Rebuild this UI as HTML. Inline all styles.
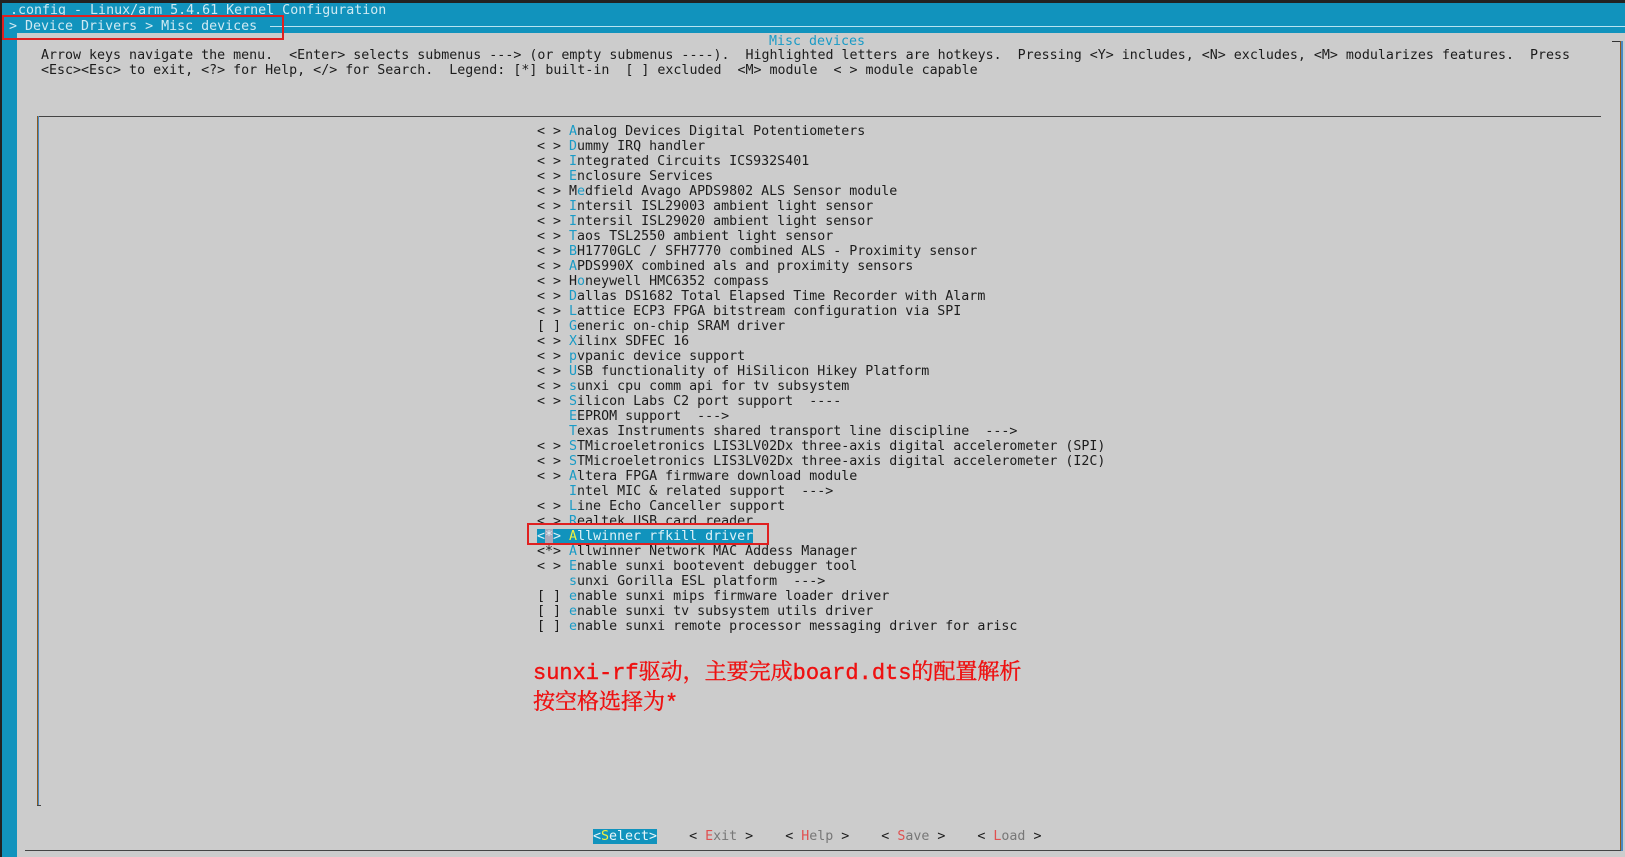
<!DOCTYPE html>
<html><head><meta charset="utf-8"><style>
html,body{margin:0;padding:0;width:1625px;height:857px;overflow:hidden;background:#cccccc}
.t{position:absolute;white-space:pre;font-family:"DejaVu Sans Mono","Liberation Mono",monospace;font-size:13.3px;line-height:15px;color:#1c1c1c}
.h{color:#1a9bc6}
.r{color:#e05050}
.g{color:#777}
.y{color:#f0f040}
</style></head><body>
<div style="position:absolute;left:0;top:0;width:1625px;height:3px;background:#222"></div>
<div style="position:absolute;left:0;top:3px;width:1625px;height:30px;background:#1193bd"></div>
<div style="position:absolute;left:0;top:0;width:2px;height:857px;background:#222"></div>
<div style="position:absolute;left:2px;top:3px;width:15px;height:854px;background:#1193bd"></div>
<div style="position:absolute;left:270px;top:26px;width:1355px;height:1px;background:#b8e4f2"></div>
<div class="t" style="left:10px;top:3px;color:#cfeaf3">.config - Linux/arm 5.4.61 Kernel Configuration</div>
<div class="t" style="left:9px;top:19px;color:#cfeaf3">&gt; Device Drivers &gt; Misc devices </div>
<div style="position:absolute;left:2px;top:15px;width:282px;height:25px;border:2px solid #e02020;box-sizing:border-box"></div>

<div class="t" style="left:769px;top:34px;color:#1a9bc6">Misc devices</div>
<div class="t" style="left:41px;top:48px">Arrow keys navigate the menu.  &lt;Enter&gt; selects submenus ---&gt; (or empty submenus ----).  Highlighted letters are hotkeys.  Pressing &lt;Y&gt; includes, &lt;N&gt; excludes, &lt;M&gt; modularizes features.  Press
&lt;Esc&gt;&lt;Esc&gt; to exit, &lt;?&gt; for Help, &lt;/&gt; for Search.  Legend: [*] built-in  [ ] excluded  &lt;M&gt; module  &lt; &gt; module capable</div>

<div style="position:absolute;left:1612px;top:41px;width:8px;height:1px;background:#333"></div>
<div style="position:absolute;left:1620px;top:41px;width:1px;height:810px;background:#8a5a20"></div>
<div style="position:absolute;left:1621px;top:41px;width:2px;height:810px;background:#4a88c0"></div>
<div style="position:absolute;left:25px;top:850px;width:1596px;height:1px;background:#444"></div>
<div style="position:absolute;left:37px;top:116px;width:1564px;height:1px;background:#444"></div>
<div style="position:absolute;left:37px;top:116px;width:1px;height:690px;background:#8a5a20"></div>
<div style="position:absolute;left:38px;top:116px;width:1px;height:690px;background:#4a88c0"></div>
<div style="position:absolute;left:37px;top:805px;width:4px;height:1px;background:#444"></div>

<div class="t" style="left:537px;top:124px">&lt; &gt; <span class="h">A</span>nalog Devices Digital Potentiometers
&lt; &gt; <span class="h">D</span>ummy IRQ handler
&lt; &gt; <span class="h">I</span>ntegrated Circuits ICS932S401
&lt; &gt; <span class="h">E</span>nclosure Services
&lt; &gt; M<span class="h">e</span>dfield Avago APDS9802 ALS Sensor module
&lt; &gt; <span class="h">I</span>ntersil ISL29003 ambient light sensor
&lt; &gt; <span class="h">I</span>ntersil ISL29020 ambient light sensor
&lt; &gt; <span class="h">T</span>aos TSL2550 ambient light sensor
&lt; &gt; <span class="h">B</span>H1770GLC / SFH7770 combined ALS - Proximity sensor
&lt; &gt; <span class="h">A</span>PDS990X combined als and proximity sensors
&lt; &gt; H<span class="h">o</span>neywell HMC6352 compass
&lt; &gt; <span class="h">D</span>allas DS1682 Total Elapsed Time Recorder with Alarm
&lt; &gt; <span class="h">L</span>attice ECP3 FPGA bitstream configuration via SPI
[ ] <span class="h">G</span>eneric on-chip SRAM driver
&lt; &gt; <span class="h">X</span>ilinx SDFEC 16
&lt; &gt; <span class="h">p</span>vpanic device support
&lt; &gt; <span class="h">U</span>SB functionality of HiSilicon Hikey Platform
&lt; &gt; <span class="h">s</span>unxi cpu comm api for tv subsystem
&lt; &gt; <span class="h">S</span>ilicon Labs C2 port support  ----
    <span class="h">E</span>EPROM support  ---&gt;
    <span class="h">T</span>exas Instruments shared transport line discipline  ---&gt;
&lt; &gt; <span class="h">S</span>TMicroeletronics LIS3LV02Dx three-axis digital accelerometer (SPI)
&lt; &gt; <span class="h">S</span>TMicroeletronics LIS3LV02Dx three-axis digital accelerometer (I2C)
&lt; &gt; <span class="h">A</span>ltera FPGA firmware download module
    <span class="h">I</span>ntel MIC &amp; related support  ---&gt;
&lt; &gt; <span class="h">L</span>ine Echo Canceller support
&lt; &gt; <span class="h">R</span>ealtek USB card reader
<span style="background:#1193bd;color:#dff2f8">&lt;<span style="background:#aab">*</span>&gt; <span class="y">A</span>llwinner rfkill driver</span>
&lt;*&gt; <span class="h">A</span>llwinner Network MAC Addess Manager
&lt; &gt; <span class="h">E</span>nable sunxi bootevent debugger tool
    <span class="h">s</span>unxi Gorilla ESL platform  ---&gt;
[ ] <span class="h">e</span>nable sunxi mips firmware loader driver
[ ] <span class="h">e</span>nable sunxi tv subsystem utils driver
[ ] <span class="h">e</span>nable sunxi remote processor messaging driver for arisc</div>
<div style="position:absolute;left:527px;top:523px;width:242px;height:22px;border:2px solid #e02020;box-sizing:border-box"></div>

<div style="position:absolute;left:533px;top:659px;font-family:'Liberation Mono','Noto Serif CJK SC',serif;font-size:22px;line-height:30px;color:#ee1111;white-space:pre;-webkit-text-stroke:0.4px #ee1111">sunxi-rf驱动，主要完成board.dts的配置解析
按空格选择为*</div>

<div class="t" style="left:593px;top:829px"><span style="background:#1193bd;color:#e8f6fb">&lt;<span class="y">S</span>elect&gt;</span>    &lt; <span class="r">E</span><span class="g">xit</span> &gt;    &lt; <span class="r">H</span><span class="g">elp</span> &gt;    &lt; <span class="r">S</span><span class="g">ave</span> &gt;    &lt; <span class="r">L</span><span class="g">oad</span> &gt;</div>
</body></html>
